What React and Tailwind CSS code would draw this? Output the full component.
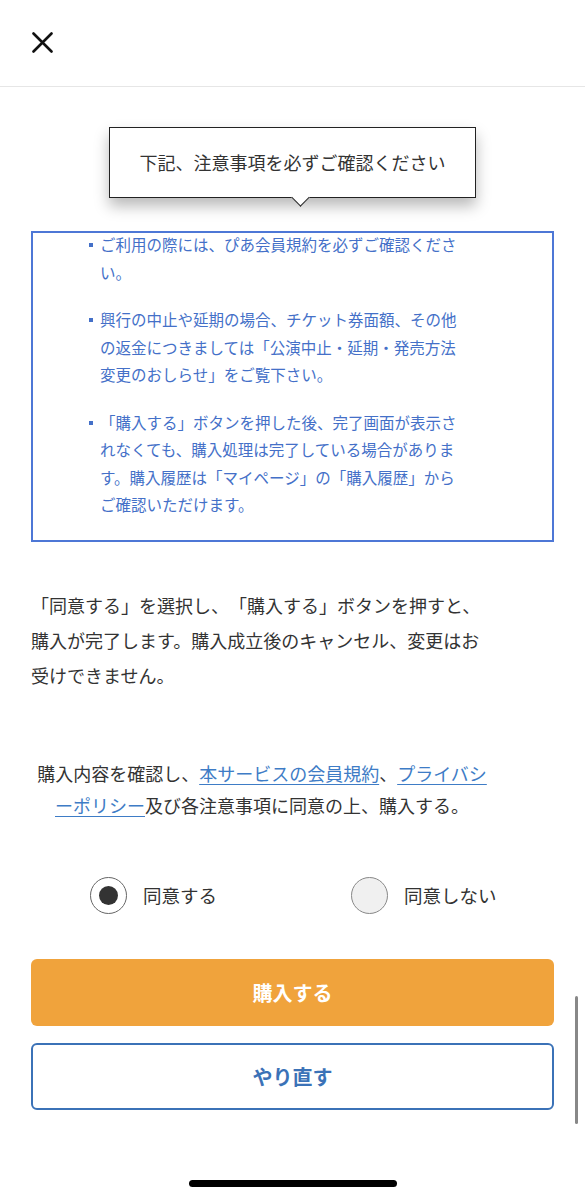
import React, { useState } from "react";

const notices = [
  "ご利用の際には、ぴあ会員規約を必ずご確認ください。",
  "興行の中止や延期の場合、チケット券面額、その他の返金につきましては「公演中止・延期・発売方法変更のおしらせ」をご覧下さい。",
  "「購入する」ボタンを押した後、完了画面が表示されなくても、購入処理は完了している場合があります。購入履歴は「マイページ」の「購入履歴」からご確認いただけます。",
];

const Radio = ({ checked, label, onClick }) => (
  <button type="button" onClick={onClick} className="flex items-center">
    <span
      className={`flex h-[37px] w-[37px] items-center justify-center rounded-full border-[1.5px] ${
        checked ? "border-[#666] bg-white" : "border-[#888] bg-[#f0f0f0]"
      }`}
    >
      {checked && <span className="h-[19px] w-[19px] rounded-full bg-[#333]" />}
    </span>
    <span className="ml-[16px] text-[18.5px] text-[#333]">{label}</span>
  </button>
);

const App = () => {
  const [agree, setAgree] = useState(true);

  return (
    <div
      className="relative min-h-[1200px] w-[585px] overflow-hidden bg-white [text-spacing-trim:space-all]"
      style={{ fontFamily: '"Noto Sans CJK JP", "Noto Sans", sans-serif' }}
    >
      {/* header */}
      <div className="flex h-[87px] items-center border-b border-[#e6e6e6] pl-[32px]">
        <svg width="21" height="21" viewBox="0 0 21 21" className="mt-[-1px]">
          <path d="M1.5 1.5 L19.5 19.5 M19.5 1.5 L1.5 19.5" stroke="#111" strokeWidth="2.6" strokeLinecap="round" />
        </svg>
      </div>

      <div className="px-[31px]">
        {/* tooltip */}
        <div className="relative z-10 mx-auto mt-[40px] flex h-[71px] w-[367px] items-center justify-center border-[1.5px] border-[#222] bg-white shadow-[0_8px_14px_rgba(0,0,0,0.28)]">
          <span className="text-[18px] text-[#333]">下記、注意事項を必ずご確認ください</span>
          <span className="absolute bottom-[-7px] left-[184px] h-[13px] w-[13px] rotate-45 border-b-[1.5px] border-r-[1.5px] border-[#222] bg-white" />
        </div>

        {/* notices */}
        <div className="mt-[33px] h-[311px] overflow-hidden border-2 border-[#4d77d6]">
          <ul className="mt-[-2px] flex flex-col gap-[20px] pl-[56px]">
            {notices.map((n, i) => (
              <li key={i} className="flex items-start">
                <span className="mt-[12px] h-[4px] w-[4px] shrink-0 bg-[#4470c8]" />
                <p className="ml-[7px] w-[358px] text-[15.5px] leading-[27.5px] text-[#4470c8]">{n}</p>
              </li>
            ))}
          </ul>
        </div>

        <p className="mt-[46px] w-[462px] text-[18px] leading-[35px] text-[#333]">
          「同意する」を選択し、「購入する」ボタンを押すと、購入が完了します。購入成立後のキャンセル、変更はお受けできません。
        </p>

        <p className="mt-[64px] w-[462px] text-center text-[18px] leading-[32px] text-[#333]">
          購入内容を確認し、
          <a href="#" className="text-[#3e7cc6] underline underline-offset-[3px]">本サービスの会員規約</a>
          、
          <a href="#" className="text-[#3e7cc6] underline underline-offset-[3px]">プライバシーポリシー</a>
          及び各注意事項に同意の上、購入する。
        </p>

        <div className="mt-[56px] flex pl-[59px]">
          <Radio checked={agree} label="同意する" onClick={() => setAgree(true)} />
          <div className="ml-[134px]">
            <Radio checked={!agree} label="同意しない" onClick={() => setAgree(false)} />
          </div>
        </div>

        <button
          type="button"
          className="mt-[45px] flex h-[67px] w-full items-center justify-center rounded-[6px] bg-[#f0a33c] text-[20px] font-bold text-white"
        >
          購入する
        </button>
        <button
          type="button"
          className="mt-[17px] flex h-[67px] w-full items-center justify-center rounded-[6px] border-2 border-[#3b72b7] bg-white text-[20px] font-bold text-[#3b72b7]"
        >
          やり直す
        </button>
      </div>

      {/* home indicator */}
      <div className="mx-auto mt-[70px] h-[7px] w-[208px] rounded-full bg-black" />

      {/* scrollbar */}
      <div className="absolute left-[575px] top-[996px] h-[128px] w-[3px] rounded-full bg-[#888]" />
    </div>
  );
};

export default App;
